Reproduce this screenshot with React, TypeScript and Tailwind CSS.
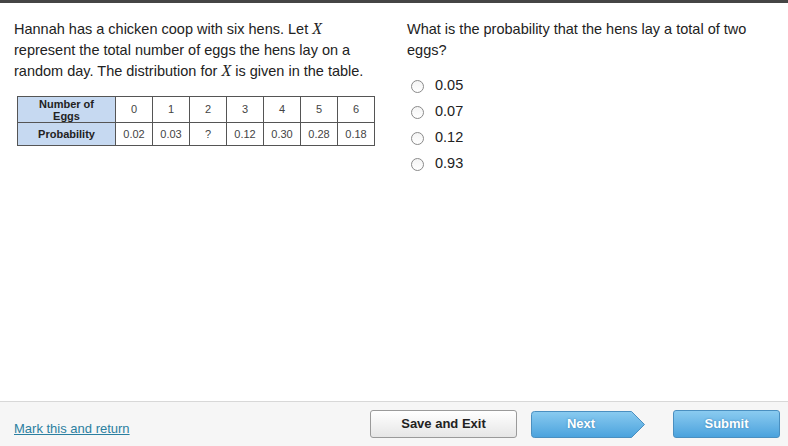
const VALUES = ['0', '1', '2', '3', '4', '5', '6'];
const PROBS = ['0.02', '0.03', '?', '0.12', '0.30', '0.28', '0.18'];
const CHOICES = ['0.05', '0.07', '0.12', '0.93'];

function Var() {
  return <i className="font-['Liberation_Serif',serif] text-[16px] leading-none">X</i>;
}

function Radio({ label }: { label: string }) {
  return (
    <label className="flex h-[26px] items-center">
      <span className="ml-[4px] size-[13px] rounded-full border border-[#8a8a8a] bg-gradient-to-b from-[#f4f4f4] to-white" />
      <span className="ml-[11px] text-[14.5px] text-[#222]">{label}</span>
    </label>
  );
}

export default function App() {
  return (
    <div className="flex h-[446px] w-[788px] flex-col bg-white font-['Liberation_Sans',Arial,sans-serif] text-[#222]">
      <div className="h-[3px] bg-[#454545]" />

      <div className="flex flex-1 pt-[16px]">
        <div className="ml-[14px] w-[362px]">
          <p className="text-[14.5px] leading-[21px]">
            Hannah has a chicken coop with six hens. Let <Var /> represent the total number of eggs the hens lay on a
            random day. The distribution for <Var /> is given in the table.
          </p>
          <table className="mt-[14px] ml-[3px] border-collapse text-[11px] text-[#444]">
            <tbody>
              <tr className="h-[26px]">
                <th className="w-[98px] border border-[#555] bg-[#c6d9f1] px-1 text-[11px] leading-[12px] font-bold text-[#222]">
                  Number of
                  <br />
                  Eggs
                </th>
                {VALUES.map((v) => (
                  <td key={v} className="w-[37px] border border-[#555] text-center">
                    {v}
                  </td>
                ))}
              </tr>
              <tr className="h-[23px]">
                <th className="border border-[#555] bg-[#c6d9f1] font-bold text-[#222]">Probability</th>
                {PROBS.map((p, i) => (
                  <td key={i} className="border border-[#555] text-center">
                    {p}
                  </td>
                ))}
              </tr>
            </tbody>
          </table>
        </div>

        <div className="ml-[31px] w-[370px]">
          <p className="text-[14.5px] leading-[21px]">What is the probability that the hens lay a total of two eggs?</p>
          <div className="mt-[12px]">
            {CHOICES.map((c) => (
              <Radio key={c} label={c} />
            ))}
          </div>
        </div>
      </div>

      <div className="flex h-[45px] items-center border-t border-[#d8d8d8] bg-[#f6f6f6] pr-[8px]">
        <a href="#" className="ml-[14px] mt-[9px] text-[13px] text-[#2b7fa0] underline">
          Mark this and return
        </a>
        <div className="ml-auto flex items-center">
          <button className="h-[28px] w-[147px] rounded-[3px] border border-[#9a9a9a] bg-gradient-to-b from-white to-[#e6e6e6] text-[13px] font-bold text-[#222]">
            Save and Exit
          </button>
          <div className="relative ml-[14px] flex h-[27px] w-[114px]">
            <svg width="114" height="27" viewBox="0 0 114 27" className="absolute inset-0">
              <defs>
                <linearGradient id="nx" x1="0" y1="0" x2="0" y2="1">
                  <stop offset="0" stopColor="#8acbf0" />
                  <stop offset="1" stopColor="#4aa2dd" />
                </linearGradient>
              </defs>
              <path
                d="M3.5 0.5 H100.5 L113.5 13.5 L100.5 26.5 H3.5 Q0.5 26.5 0.5 23.5 V3.5 Q0.5 0.5 3.5 0.5 Z"
                fill="url(#nx)"
                stroke="#4a8fc0"
              />
            </svg>
            <span className="relative w-[100px] self-center text-center text-[13px] font-bold text-white [text-shadow:0_0_2px_#3a7fb0]">
              Next
            </span>
          </div>
          <button className="ml-[28px] h-[28px] w-[107px] rounded-[3px] border border-[#4a8fc0] bg-gradient-to-b from-[#8acbf0] to-[#4aa2dd] text-[13px] font-bold text-white [text-shadow:0_0_2px_#3a7fb0]">
            Submit
          </button>
        </div>
      </div>
    </div>
  );
}
